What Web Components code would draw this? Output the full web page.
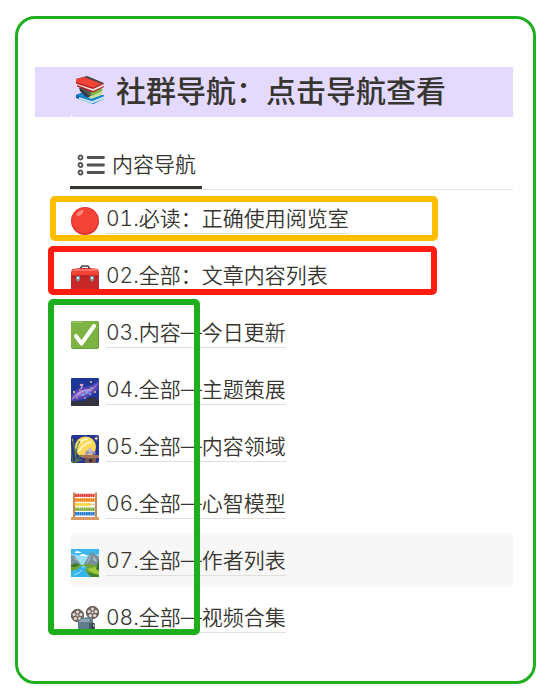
<!DOCTYPE html>
<html lang="zh-CN">
<head>
<meta charset="utf-8">
<meta name="viewport" content="width=device-width, initial-scale=1">
<title>社群导航</title>
<style>
  body {
    margin: 16px 14px 16px 15px;
    background: #fff;
    color: #37352f;
    font-family: Inter, "Noto Sans CJK SC", sans-serif;
    font-weight: 350;
    font-variant-numeric: tabular-nums;
  }
</style>
</head>
<body>
<page-frame>
  <page-banner icon="books">社群导航：点击导航查看</page-banner>
  <tab-bar>内容导航</tab-bar>
  <nav-list>
    <nav-item icon="circle">01.必读：正确使用阅览室</nav-item>
    <nav-item icon="toolbox">02.全部：文章内容列表</nav-item>
    <nav-item icon="check">03.内容—今日更新</nav-item>
    <nav-item icon="galaxy">04.全部—主题策展</nav-item>
    <nav-item icon="moon">05.全部—内容领域</nav-item>
    <nav-item icon="abacus">06.全部—心智模型</nav-item>
    <nav-item icon="park" active>07.全部—作者列表</nav-item>
    <nav-item icon="projector">08.全部—视频合集</nav-item>
    <mark-box slot="marks" class="must"></mark-box>
    <mark-box slot="marks" class="all"></mark-box>
    <mark-box slot="marks" class="rest"></mark-box>
  </nav-list>
</page-frame>

<script>
// 28x28 pictures, keyed by the icon attribute
const beads = ['#e53935', '#f57c00', '#fdd835', '#7cb342', '#1e78d0'].map((color, i) => {
  const y = 3.4 + i * 4.6;
  return `<path d="M3 ${y}H25" stroke="#c9a27c" stroke-width=".7"/>
    <path d="M4 ${y}H${i === 2 ? 20 : 24}" stroke="${color}" stroke-width="3.4" stroke-dasharray="1.8 .4"/>`;
}).join('');

const reel = (x, y) => {
  let holes = '';
  for (let i = 0; i < 5; i++) {
    const a = i * Math.PI * 2 / 5 - Math.PI / 2;
    holes += `<circle cx="${x + Math.cos(a) * 3.6}" cy="${y + Math.sin(a) * 3.6}" r="1.5" fill="#e6e0dc"/>`;
  }
  return `<circle cx="${x}" cy="${y}" r="6.2" fill="#75665f" stroke="#4e4742" stroke-width=".8"/>${holes}
    <circle cx="${x}" cy="${y}" r="1" fill="#ddd"/>`;
};

const icons = {
  books: `
    <path d="M0 19L12 14L28 19.5V23L17 28L0 22Z" fill="#0b67ad"/>
    <path d="M3 21L16 25L28 20V23L16 27.5L3 23Z" fill="#c5e3f2"/>
    <path d="M0 19L13 15L28 20L16 25Z" fill="#1683cf"/>
    <path d="M3 12L12 20L25 18L26 13L18 10Z" fill="#4f5550"/>
    <path d="M12 21L26 15V19L15 23Z" fill="#c6e39d"/>
    <path d="M3 11L14 21L10 21L4 15Z" fill="#33363a"/>
    <path d="M14 17L25 12L27 14L16 20Z" fill="#7fb642"/>
    <path d="M0 3L11 0L28 7L17 12Z" fill="#444"/>
    <path d="M0 3L8 1L25 7.500L17 12L0 7Z" fill="#f44336"/>
    <path d="M0 7L17 12L28 7V10.500L17 16L1 9.500Z" fill="#e8e0df"/>
    <path d="M0 6L17 11.500L28 7L28 8L17 13L0 7.500ZM1 9L17 15L28 10V11L17 16.500L1 10.500Z" fill="#b71c1c"/>`,
  circle: `
    <circle cx="14" cy="14" r="14" fill="#d9302c"/>
    <circle cx="14" cy="13.500" r="13" fill="#f44336"/>
    <ellipse cx="9" cy="6" rx="4" ry="2" transform="rotate(-38 9 6)" fill="#ff8a80"/>`,
  toolbox: `
    <path d="M9 5L11 2H17L19 5" fill="none" stroke="#444a4d" stroke-width="1.6"/>
    <path d="M1 5Q14 3 27 5L28 9V25H0V9Z" fill="#c62828"/>
    <path d="M2 5H26L28 11H0Z" fill="#f44336"/>
    <path d="M2 5H26L27 7H1Z" fill="#ff7062"/>
    <path d="M0 13H28" stroke="#a91f1f" stroke-width="1"/>
    <path d="M5 12H9V16L7 18L5 16ZM19 12H23V16L21 18L19 16Z" fill="#78909c"/>
    <path d="M6 13H8V15H6ZM20 13H22V15H20Z" fill="#d5e7ee"/>`,
  check: `
    <rect width="28" height="28" rx="2" fill="#689f38"/>
    <rect width="27" height="27" rx="2" fill="#7cb342"/>
    <path d="M2 1.200H11" stroke="#aed581" stroke-width="1" stroke-linecap="round"/>
    <path d="M5 15L10.500 22.500L23 5" fill="none" stroke="#fff" stroke-width="4" stroke-linecap="round" stroke-linejoin="round"/>`,
  galaxy: `
    <rect width="28" height="28" rx="1" fill="#1f3699"/>
    <path d="M0 18Q6 9 13 9Q21 9 28 2V10Q20 20 12 21Q4 23 0 24Z" fill="#5145b5"/>
    <path d="M1 20Q7 11 15 12Q20 11 27 5Q22 15 12 18Q6 18 1 22Z" fill="#9575cd"/>
    <path d="M6 17Q12 11 19 12M10 11L12 6" stroke="#c9a5e8" stroke-width="1.3" fill="none"/>
    <path d="M0 28V24Q4 22 8 23Q13 24 16 21Q22 17 28 22V28Z" fill="#33343b"/>
    <g fill="#ffe36e"><circle cx="3" cy="14" r="1"/><circle cx="9" cy="12" r=".7"/><circle cx="20" cy="4" r=".9"/><circle cx="24" cy="14" r=".9"/><circle cx="14" cy="20" r=".8"/><circle cx="6" cy="20" r=".7"/><circle cx="20" cy="10" r=".7"/></g>
    <g fill="#4dd0e1"><circle cx="12" cy="17" r="1.100"/><circle cx="16" cy="14" r="1"/><circle cx="19" cy="16" r="1"/></g>
    <circle cx="10" cy="7" r="1.300" fill="#f3a1b0"/>`,
  moon: `
    <rect width="28" height="28" rx="2" fill="#283593"/>
    <circle cx="14.500" cy="12" r="10.500" fill="#fdd957"/>
    <path d="M6 13Q8 5 16 4M8 16Q12 9 20 7" stroke="#fff8cf" stroke-width="1.8" fill="none" stroke-linecap="round"/>
    <path d="M5 28Q4 12 1 3M2 28Q0 17 0 11M5 26Q4 14 9 6M5 27Q9 20 11 20M3 28Q8 24 11 25" stroke="#547d3d" stroke-width="1.2" fill="none"/>
    <path d="M19 13L22 16V19H16V16Z" fill="#a9a1bd"/>
    <circle cx="19" cy="15" r="2" fill="#c3bdd1"/><circle cx="16" cy="18" r="2" fill="#9e98b0"/><circle cx="20" cy="18" r="2" fill="#b9b2c8"/><circle cx="23" cy="18" r="1.800" fill="#918aa5"/>
    <path d="M11 20H28V23H11Z" fill="#a4735a"/><path d="M14 23H25V28H14Z" fill="#795548"/>
    <path d="M18 24H21V27H18Z" fill="#352b39"/>
    <path d="M25 1L26 3L28 3L26 4L25 6L24.500 4L23 3L24.500 3ZM1 4L2 5L1 6Z" fill="#fff59d"/>`,
  abacus: `
    <path d="M3 .500V26M25 .500V26" stroke="#c98752" stroke-width="2"/>
    <rect y="25" width="28" height="3" rx=".5" fill="#d99a65"/>${beads}`,
  park: `
    <rect width="28" height="28" rx="1" fill="#9be0fb"/>
    <path d="M0 0H28V5Q14 8 0 5Z" fill="#3cb8ef"/>
    <path d="M4 3Q6 1 9 3L11 4H4ZM9 6Q12 4 15 6L17 7H9Z" fill="#fff"/>
    <path d="M0 6L4 7L10 16H0ZM13 15L17 8L21 3L28 8V18H13Z" fill="#78909c"/>
    <path d="M3 7L7 12L4 11ZM21 4L18 12L15 15ZM23 7L26 13L22 11Z" fill="#b0c1c9"/>
    <path d="M0 16L5 15L11 16L18 15L28 17V28H0Z" fill="#6fa52f"/>
    <path d="M0 16L5 14L9 16L4 18L0 18Z" fill="#3c7a2f"/>
    <path d="M16 20L28 17V26L22 24Z" fill="#9ccc3c"/>
    <path d="M10 17Q19 17 15 20Q13 22 20 28H0V22Q9 20 8 18Z" fill="#36b5ed"/>
    <path d="M11 18L14 17.500M3 26Q9 24 11 21" stroke="#b3e5fc" stroke-width="1" fill="none"/>
    <path d="M20 28L16 23L28 26V28Z" fill="#43822e"/>
    <path d="M25 20L26.500 14L28 11V22Z" fill="#39752d"/>`,
  projector: `
    ${reel(6.5, 9.5)}${reel(21.500, 6.5)}
    <path d="M7 15L10 12L20 11L22 14V28H7Z" fill="#607d8b"/>
    <path d="M8 15L11 13H19L18 16H8Z" fill="#90a4ae"/>
    <path d="M18 17H22V24H18Z" fill="#455a64"/>
    <ellipse cx="22.500" cy="20" rx="1.500" ry="3.200" fill="#263238"/>
    <ellipse cx="22.800" cy="19.500" rx=".7" ry="1.500" fill="#cfd8dc"/>`
};

class PicIcon extends HTMLElement {
  constructor() {
    super();
    this.attachShadow({ mode: 'open' });
  }

  connectedCallback() {
    this.shadowRoot.innerHTML = `
      <style>
        :host { display: block; flex: none; width: 28px; height: 28px; }
        svg { display: block; width: 100%; height: 100%; }
      </style>
      <svg viewBox="0 0 28 28" aria-hidden="true">${icons[this.getAttribute('name')]}</svg>
    `;
  }
}

class PageFrame extends HTMLElement {
  constructor() {
    super();
    this.attachShadow({ mode: 'open' }).innerHTML = `
      <style>
        :host {
          display: block;
          padding: 48px 20px 37px 17px;
          border: 3px solid #1eae1e;
          border-radius: 20px;
        }
      </style>
      <slot></slot>
    `;
  }
}

class PageBanner extends HTMLElement {
  constructor() {
    super();
    this.attachShadow({ mode: 'open' });
  }

  connectedCallback() {
    this.shadowRoot.innerHTML = `
      <style>
        :host { display: flex; }
        .edge { width: 36px; background: #e4daff; }
        h1 {
          flex: 1;
          display: flex;
          align-items: center;
          gap: 12px;
          margin: 0;
          padding: 0 0 2px 5px;
          border-radius: 0 0 0 4px;
          background: #e4daff;
          font-size: 30px;
          font-weight: 500;
          line-height: 48px;
        }
        pic-icon { margin-bottom: 2px; }
      </style>
      <div class="edge"></div>
      <h1><pic-icon name="${this.getAttribute('icon')}"></pic-icon><span><slot></slot></span></h1>
    `;
  }
}

class TabBar extends HTMLElement {
  constructor() {
    super();
    this.attachShadow({ mode: 'open' }).innerHTML = `
      <style>
        :host {
          display: flex;
          margin: 28px 0 0 35px;
          border-bottom: 1px solid #e3e3e1;
        }
        button {
          display: flex;
          align-items: center;
          gap: 7px;
          padding: 0 6px 2px 7px;
          border: 0;
          border-bottom: 3px solid #37352f;
          background: none;
          color: inherit;
          font: inherit;
          font-size: 21px;
          line-height: 39px;
          cursor: pointer;
        }
        svg { width: 28px; height: 22px; }
      </style>
      <button type="button">
        <svg viewBox="0 0 28 22" fill="none" stroke="#555351" aria-hidden="true">
          <g stroke-width="1.800"><circle cx="3.500" cy="3.500" r="2"/><circle cx="3.500" cy="11" r="2"/><circle cx="3.500" cy="18.500" r="2"/></g>
          <path d="M11 3.500H26.500M11 11H26.500M11 18.500H26.500" stroke-width="2.800" stroke-linecap="round"/>
        </svg>
        <span><slot></slot></span>
      </button>
    `;
  }
}

class NavList extends HTMLElement {
  constructor() {
    super();
    this.attachShadow({ mode: 'open' }).innerHTML = `
      <style>
        :host { display: block; position: relative; margin: 1px 0 0 35px; }
        nav { display: flex; flex-direction: column; gap: 3px; }
        ::slotted(.must) { --mark: #ffbf00; top: 5px; left: -20px; width: 388px; height: 45px; }
        ::slotted(.all) { --mark: #ff1d12; top: 55px; left: -22px; width: 389px; height: 49px; }
        ::slotted(.rest) { --mark: #1eae1e; top: 108px; left: -22px; width: 152px; height: 336px; }
      </style>
      <nav><slot></slot></nav>
      <slot name="marks"></slot>
    `;
  }
}

class NavItem extends HTMLElement {
  constructor() {
    super();
    this.attachShadow({ mode: 'open' });
  }

  connectedCallback() {
    this.shadowRoot.innerHTML = `
      <style>
        :host { display: block; border-radius: 5px 0 0 5px; }
        :host([active]), :host(:hover) { background: #f7f7f7; }
        a {
          display: flex;
          align-items: center;
          gap: 7px;
          height: 54px;
          padding-left: 1px;
          color: inherit;
          font-size: 21px;
          line-height: 28px;
          text-decoration: none;
        }
        pic-icon { margin-top: 6px; }
        span { padding-top: 2px; border-bottom: 1px solid #dfdfde; white-space: nowrap; }
      </style>
      <a href="#"><pic-icon name="${this.getAttribute('icon')}"></pic-icon><span><slot></slot></span></a>
    `;
  }
}

// Coloured outline laid over a group of rows
class MarkBox extends HTMLElement {
  constructor() {
    super();
    this.attachShadow({ mode: 'open' }).innerHTML = `
      <style>
        :host {
          position: absolute;
          box-sizing: border-box;
          border: 6px solid var(--mark);
          border-radius: 5px;
          pointer-events: none;
        }
      </style>
    `;
  }
}

customElements.define('pic-icon', PicIcon);
customElements.define('page-frame', PageFrame);
customElements.define('page-banner', PageBanner);
customElements.define('tab-bar', TabBar);
customElements.define('nav-list', NavList);
customElements.define('nav-item', NavItem);
customElements.define('mark-box', MarkBox);
</script>
</body>
</html>
